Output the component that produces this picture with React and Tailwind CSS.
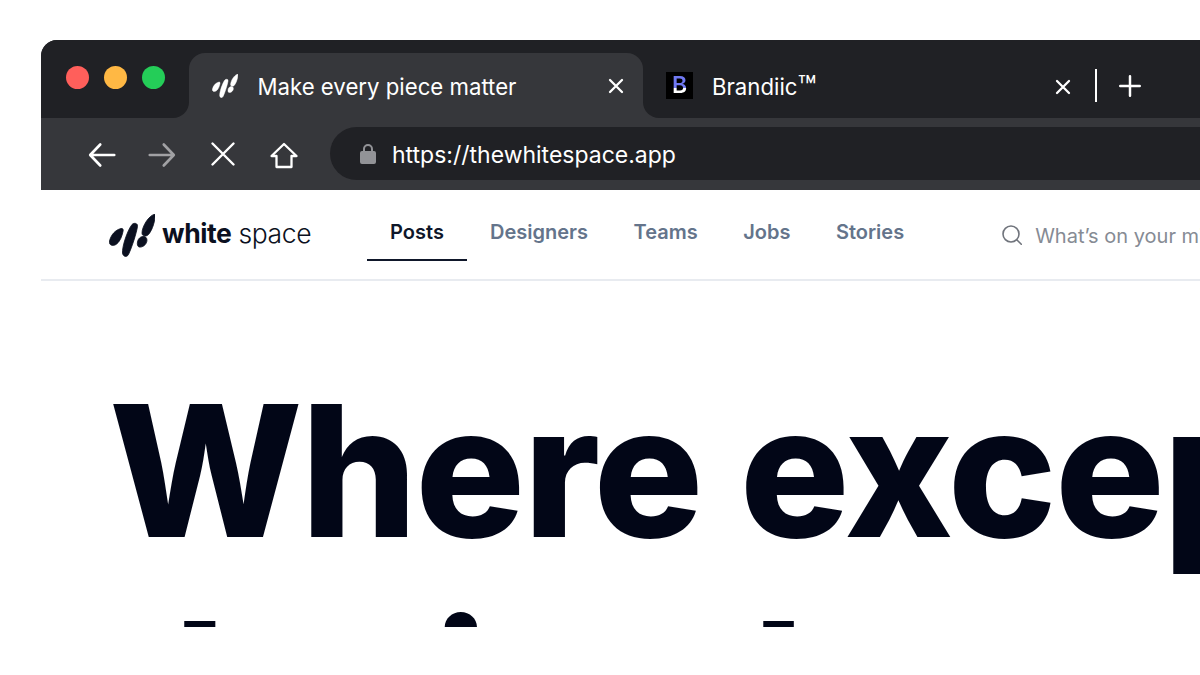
const inter = { fontFamily: "Inter, sans-serif" }

function Logo({ className, fill }) {
  return (
    <svg viewBox="0 0 46 43" className={className} fill={fill} stroke={fill} strokeWidth="0.800">
      <path d="M0.500 27C2 21 6 16 12 14.500C14 14 14.500 15.500 14 17.500C13 22 11 28 7 30.500C3.500 32.500 -0.500 31 0.500 27Z" />
      <path d="M13.500 39C13 33 18 17 23 10.500C25 8.500 29 9 28.500 12.500C27.500 19 23 33 19.500 40.500C18 43.500 14 43 13.500 39Z" />
      <path d="M33 19C33 13 39 2 46 0C46.500 6 43.500 16 39.500 20.500C37 23 33 22.500 33 19Z" />
      <path d="M28.500 28C29 24.500 32 22 35 22.500C38 23 38.500 26 37.500 28.500C36 32 32.500 33.500 30 33C28.500 32.500 28 30 28.500 28Z" />
    </svg>
  )
}

function Line({ d, className }) {
  return (
    <svg viewBox="0 0 32 32" className={className} fill="none" stroke="currentColor" strokeWidth="2.600" strokeLinecap="round" strokeLinejoin="round">
      <path d={d} />
    </svg>
  )
}

function CloseIcon({ className }) {
  return (
    <svg viewBox="0 0 16 16" className={className} fill="none" stroke="currentColor" strokeWidth="2.300" strokeLinecap="round">
      <path d="M2 2L14 14M14 2L2 14" />
    </svg>
  )
}

const links = ["Designers", "Teams", "Jobs", "Stories"]

export default function App() {
  return (
    <div className="w-[1200px] h-[675px] overflow-hidden bg-white pl-[41px] pt-10" style={inter}>
      <div className="w-[1300px] overflow-hidden rounded-tl-2xl bg-[#36373b]">
        {/* TABS */}
        <div className="flex h-[78px]">
          <div className="flex w-[148px] items-start gap-[15px] rounded-br-2xl bg-[#202125] pl-[25px] pt-[26px]">
            <span className="size-[23px] rounded-full bg-[#ff5f5b]" />
            <span className="size-[23px] rounded-full bg-[#ffb844]" />
            <span className="size-[23px] rounded-full bg-[#24cd58]" />
          </div>
          <div className="bg-[#202125] pt-[13px]">
            <div className="flex h-[65px] w-[454px] items-center rounded-t-2xl bg-[#36373b] pl-[23px] pr-[19px] text-white">
              <Logo className="h-[24px] w-[26px]" fill="#ffffff" />
              <span className="ml-[19.500px] mt-[4px] text-[22.200px] leading-none">Make every piece matter</span>
              <CloseIcon className="ml-auto size-[16px]" />
            </div>
          </div>
          <div className="flex flex-1 items-start rounded-bl-2xl bg-[#202125] pl-[23px] pt-[32px] text-white">
            <span className="flex size-[27px] items-center justify-center bg-black">
              <span className="bg-[linear-gradient(#7079f2_60%,#ffffff_60%)] bg-clip-text text-[23px] leading-none font-semibold text-transparent">B</span>
            </span>
            <span className="-mt-px ml-[19px] w-[107px] text-[22.200px] leading-[30px] whitespace-nowrap">
              Brandiic<span className="align-[-3px] text-[31px] leading-none">™</span>
            </span>
            <CloseIcon className="ml-[236px] mt-[7px] size-[16px]" />
            <span className="ml-[24px] -mt-[3px] h-[33px] w-[2px] bg-white" />
            <Line d="M16 3V29M3 16H29" className="ml-[21px] mt-[2px] size-[24px] stroke-[3.300]" />
          </div>
        </div>

        {/* TOOLBAR */}
        <div className="flex h-[72px] items-start pl-[47px] pt-[9px] text-white">
          <Line d="M30 16H3M14 4L2.500 16L14 28" className="mt-[14px] size-[28px] stroke-[3]" />
          <Line d="M2 16H29M18 4L29.500 16L18 28" className="ml-[32px] mt-[14px] size-[28px] stroke-[3] text-[#a1a1a4]" />
          <Line d="M4 4L28 28M28 4L4 28" className="ml-[33px] mt-[13px] size-[28px] stroke-[2.800]" />
          <svg viewBox="0 0 28 28" className="ml-[33px] mt-[15px] size-[28px]" fill="none" stroke="currentColor" strokeWidth="2.300" strokeLinejoin="round">
            <path d="M1.500 14L14 2L26.500 14H21.500V25H6.500V14Z" />
          </svg>
          <div className="ml-[32px] flex h-[53px] flex-1 items-center rounded-l-full bg-[#202125] pl-[30px]">
            <svg viewBox="0 0 16 20" className="h-[20px] w-[16px]" fill="#929397">
              <path fillRule="evenodd" d="M3 7V5a5 5 0 0 1 10 0v2h1a2 2 0 0 1 2 2v9a2 2 0 0 1-2 2H2a2 2 0 0 1-2-2V9a2 2 0 0 1 2-2ZM5 7h6V5a3 3 0 0 0-6 0Z" />
            </svg>
            <span className="ml-[16px] mt-[4px] text-[23px] leading-none">https://thewhitespace.app</span>
          </div>
        </div>
      </div>

      {/* NAV */}
      <div className="flex h-[91px] w-[1300px] border-b-2 border-[#e8ebf0] pl-[68px]">
        <div className="flex w-[202px] items-start pt-[24px]">
          <Logo className="h-[43px] w-[46px] shrink-0" fill="#0b1020" />
          <span className="ml-[7px] text-[26.500px] leading-[38px] tracking-[-0.4px] whitespace-nowrap text-[#0b1020]">
            <span className="font-bold">white</span> <span className="font-light">space</span>
          </span>
        </div>
        <nav className="ml-[56px] flex gap-[45.500px] text-[20px] font-semibold text-[#64748b]">
          <a className="-mr-[22.500px] flex h-[71px] w-[100px] items-start justify-center border-b-2 border-[#0f172a] pt-[28px] leading-[28px] text-[#0f172a]">
            Posts
          </a>
          {links.map((l) => (
            <a key={l} className="pt-[28px] leading-[28px]">{l}</a>
          ))}
        </nav>
        <div className="ml-[98px] flex items-start pt-[34px] text-[20px] text-[#868b94]">
          <svg viewBox="0 0 20 20" className="mt-[1px] size-[20px]" fill="none" stroke="#70747c" strokeWidth="1.600" strokeLinecap="round">
            <circle cx="9" cy="9" r="8" />
            <path d="M15 15L19.300 19.300" />
          </svg>
          <span className="ml-[13px] leading-[24px] whitespace-nowrap">What’s on your mind?</span>
        </div>
      </div>

      {/* HERO */}
      <div className="h-[346px] w-[1300px] overflow-hidden pl-[68px] text-[183px] leading-[184px] font-extrabold tracking-[-1.800px] whitespace-nowrap text-[#020617]">
        <h1 className="mt-[98px]">Where exceptional</h1>
        <p className="mt-[33px]">design happens</p>
      </div>
    </div>
  )
}
